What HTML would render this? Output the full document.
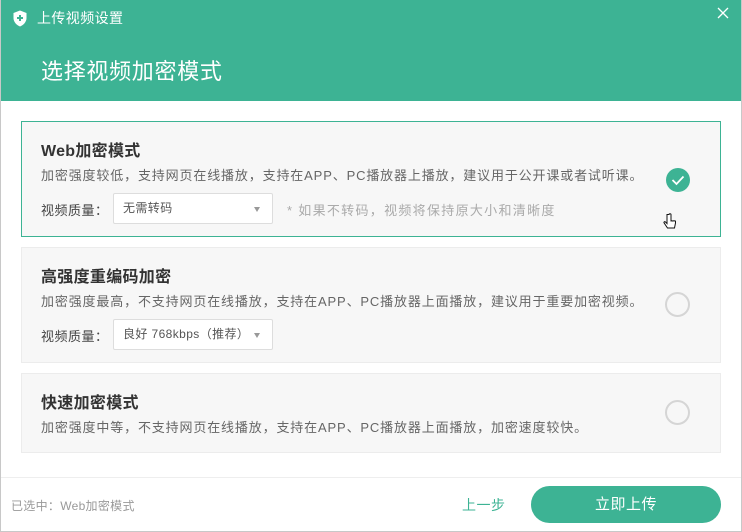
<!DOCTYPE html>
<html><head><meta charset="utf-8"><style>
*{margin:0;padding:0;box-sizing:border-box}
body{width:742px;height:532px;font-family:"Liberation Sans","Noto Sans CJK SC",sans-serif;background:#fff;position:relative;overflow:hidden;color:#333}
.win{position:absolute;left:0;top:0;width:742px;height:532px;border:1px solid #c8c8c8;border-top:none}
.hdr{position:absolute;left:0;top:0;width:742px;height:101px;background:#3db394}
.t{position:absolute;white-space:nowrap}
.card{position:absolute;left:21px;width:700px;background:#f7f7f7;border:1px solid #ececec}
.card.sel{border-color:#3db394}
.ti{position:absolute;left:19px;font-size:16px;font-weight:bold;color:#333;letter-spacing:0.3px}
.de{position:absolute;left:19px;font-size:13px;color:#666;letter-spacing:0.85px}
.lb{position:absolute;left:19px;font-size:13px;color:#444;letter-spacing:0.5px}
.sel-b{position:absolute;left:91px;width:160px;height:31px;background:#fff;border:1px solid #ddd;border-radius:2px;font-size:12px;color:#555;padding-left:9px;line-height:29px;letter-spacing:0.4px}
.sel-b:after{content:"";position:absolute;right:12px;top:13px;border:3.5px solid transparent;border-top:5px solid #999;border-bottom:none}
.rad{position:absolute;left:643px;width:25px;height:25px;border-radius:50%;border:2px solid #d5d5d5}
</style></head><body>
<div class="hdr"></div>
<svg style="position:absolute;left:12px;top:10px" width="16" height="17" viewBox="0 0 16 17"><path d="M8 0.5L1.5 3v5c0 4 3 7 6.5 8.5 3.5-1.5 6.5-4.5 6.5-8.5V3z" fill="#fff"/><path d="M8 5v6M5 8h6" stroke="#3db394" stroke-width="2"/></svg>
<div class="t" style="left:37px;top:8px;font-size:14px;color:#fff;letter-spacing:0.4px">上传视频设置</div>
<svg style="position:absolute;left:717px;top:7px" width="12" height="12"><path d="M1 1L11 11M11 1L1 11" stroke="#fff" stroke-width="1.3"/></svg>
<div class="t" style="left:41px;top:54px;font-size:22px;color:#fff;letter-spacing:0.7px">选择视频加密模式</div>

<div class="card sel" style="top:121px;height:116px">
<div class="t ti" style="top:15px">Web加密模式</div>
<div class="t de" style="top:43px">加密强度较低，支持网页在线播放，支持在APP、PC播放器上播放，建议用于公开课或者试听课。</div>
<div class="t lb" style="top:78px">视频质量：</div>
<div class="sel-b" style="top:71px">无需转码</div>
<div class="t" style="left:265px;top:78px;font-size:13px;color:#aaa;letter-spacing:1.3px">* 如果不转码，视频将保持原大小和清晰度</div>
<svg style="position:absolute;left:643px;top:45px" width="26" height="26"><circle cx="13" cy="13" r="12" fill="#3db394"/><path d="M7.5 13l4 4 7-7.5" stroke="#fff" stroke-width="1.8" fill="none"/></svg>
<svg style="position:absolute;left:641px;top:91px" width="14" height="18" viewBox="0 0 14 18"><path d="M4 1.5v9L2.5 9c-1-.8-2 .2-1.3 1.1L4.5 15h7l1-5V8.5c0-1-1.5-1-1.5 0 0-1-1.5-1-1.5 0 0-1-1.5-1-1.5 0V1.5c0-1-2-1-2 0z" fill="#fff" stroke="#111" stroke-width="1"/></svg>
</div>

<div class="card" style="top:247px;height:116px">
<div class="t ti" style="top:15px">高强度重编码加密</div>
<div class="t de" style="top:43px">加密强度最高，不支持网页在线播放，支持在APP、PC播放器上面播放，建议用于重要加密视频。</div>
<div class="t lb" style="top:78px">视频质量：</div>
<div class="sel-b" style="top:71px">良好 768kbps（推荐）</div>
<div class="rad" style="top:44px"></div>
</div>

<div class="card" style="top:373px;height:80px">
<div class="t ti" style="top:15px">快速加密模式</div>
<div class="t de" style="top:43px">加密强度中等，不支持网页在线播放，支持在APP、PC播放器上面播放，加密速度较快。</div>
<div class="rad" style="top:26px"></div>
</div>

<div style="position:absolute;left:1px;top:477px;width:740px;height:1px;background:#eee"></div>
<div class="t" style="left:11px;top:497px;font-size:12px;color:#999;letter-spacing:0.3px">已选中：Web加密模式</div>
<div class="t" style="left:462px;top:495px;font-size:14px;color:#3db394;letter-spacing:0.5px">上一步</div>
<div style="position:absolute;left:531px;top:486px;width:190px;height:37px;border-radius:19px;background:#3db394;color:#fff;font-size:15px;text-align:center;line-height:37px;letter-spacing:0.5px">立即上传</div>
<div class="win"></div>
</body></html>
